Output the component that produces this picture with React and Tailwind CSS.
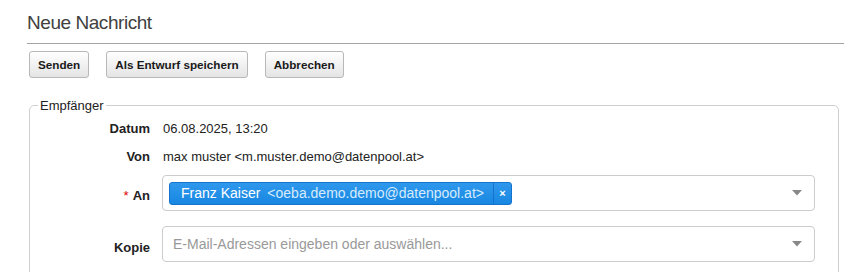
import React from "react";

function Btn({ children }) {
  return (
    <button className="h-[27px] px-[8px] rounded-[3px] border border-[#b8b8b8] bg-gradient-to-b from-[#ffffff] to-[#e4e4e4] text-[11.7px] font-bold text-[#1a1a1a] leading-none">
      {children}
    </button>
  );
}

function Caret() {
  return (
    <svg width="10" height="6" viewBox="0 0 10 6" className="shrink-0">
      <path d="M0 0 L10 0 L5 5.5 Z" fill="#888" />
    </svg>
  );
}

export default function App() {
  return (
    <div
      className="w-[860px] h-[272px] overflow-hidden bg-white pl-[27px] pr-[16px]"
      style={{ fontFamily: '"Liberation Sans", Arial, sans-serif' }}
    >
      <h1 className="pt-[10px] text-[19px] tracking-[-0.45px] leading-[25px] text-[#404040] font-normal">Neue Nachricht</h1>
      <div className="mt-[8px] h-px bg-[#a3a3a3]" />
      <div className="mt-[7px] ml-[2px] flex gap-[17px]">
        <Btn>Senden</Btn>
        <Btn>Als Entwurf speichern</Btn>
        <Btn>Abbrechen</Btn>
      </div>
      <fieldset className="mt-[20px] ml-[2px] mr-[5px] border border-[#cfcfcf] rounded-[5px] pb-[30px] pr-[23px]">
        <legend className="ml-[8px] px-[2px] text-[13px] leading-[15px] text-[#222]">Empfänger</legend>
        <div className="pt-[6px] flex flex-col text-[13px] text-[#222]">
          <div className="flex items-center h-[20px]">
            <div className="w-[120px] text-right font-bold">Datum</div>
            <div className="ml-[13px]">06.08.2025, 13:20</div>
          </div>
          <div className="flex items-center h-[20px] mt-[8px]">
            <div className="w-[120px] text-right font-bold">Von</div>
            <div className="ml-[13px]">max muster &lt;m.muster.demo@datenpool.at&gt;</div>
          </div>
          <div className="flex items-start mt-[8px]">
            <div className="w-[120px] text-right font-bold pt-[11px] leading-[20px]">
              <span className="text-[#e00000] font-normal mr-[4px]">*</span>An
            </div>
            <div className="ml-[12px] flex-1 h-[36px] border border-[#cccccc] rounded-[4px] flex items-center pl-[6px] pr-[12px]">
              <div className="flex h-[23px] rounded-[3px] border border-[#1474cc] bg-gradient-to-b from-[#2e98ec] to-[#1787e2] text-white text-[14px]">
                <div className="flex items-center pl-[11px] pr-[9px]">
                  <span>Franz Kaiser</span>
                  <span className="ml-[7px] text-[#d6ebfc]">&lt;oeba.demo.demo@datenpool.at&gt;</span>
                </div>
                <div className="w-[18px] border-l border-[#1474cc] flex items-center justify-center text-[11px] font-bold">×</div>
              </div>
              <div className="flex-1" />
              <Caret />
            </div>
          </div>
          <div className="flex items-start mt-[15px]">
            <div className="w-[120px] text-right font-bold pt-[12px] leading-[20px]">Kopie</div>
            <div className="ml-[12px] flex-1 h-[36px] border border-[#cccccc] rounded-[4px] flex items-center pl-[10px] pr-[12px]">
              <span className="text-[14px] text-[#999]">E-Mail-Adressen eingeben oder auswählen...</span>
              <div className="flex-1" />
              <Caret />
            </div>
          </div>
        </div>
      </fieldset>
    </div>
  );
}
